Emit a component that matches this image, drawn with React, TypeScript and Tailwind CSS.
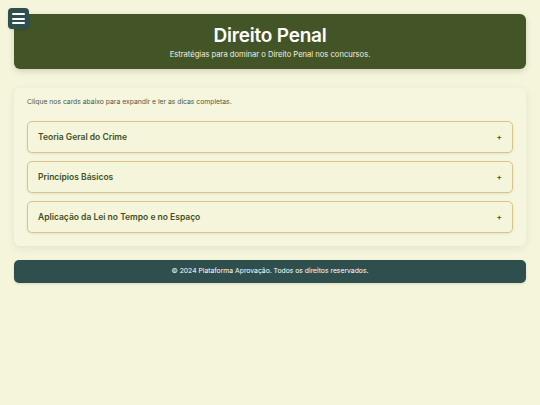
import React from "react";

const items = [
  "Teoria Geral do Crime",
  "Princípios Básicos",
  "Aplicação da Lei no Tempo e no Espaço",
];

export default function App() {
  return (
    <div
      className="min-h-[405px] bg-[#f5f5dc] px-[14px] pt-[14px] pb-4 relative"
      style={{ fontFamily: "Inter, 'Noto Sans', sans-serif" }}
    >
      <button className="absolute left-[8px] top-[8px] w-[21px] h-[21px] rounded-[4px] bg-[#2f4f4f] flex flex-col items-center justify-center gap-[2.5px] shadow z-10">
        <span className="block w-[13px] h-[2px] bg-white rounded" />
        <span className="block w-[13px] h-[2px] bg-white rounded" />
        <span className="block w-[13px] h-[2px] bg-white rounded" />
      </button>

      <header className="h-[55px] rounded-[6px] bg-[#435527] flex flex-col items-center justify-center text-white shadow-[0_2px_6px_rgba(0,0,0,0.15)]">
        <h1 className="text-[19px] leading-[22px] font-semibold tracking-[-0.2px] mt-[1px]">Direito Penal</h1>
        <p className="text-[7.6px] leading-[10px] mt-[3px] text-[#f0f0e0]">
          Estratégias para dominar o Direito Penal nos concursos.
        </p>
      </header>

      <main className="mt-[19px] rounded-[6px] bg-[#f6f5dd] shadow-[0_2px_8px_rgba(0,0,0,0.08)] px-[13px] pt-[9px] pb-[13px]">
        <p className="text-[6.8px] leading-[10px] text-[#4b5a4a]">
          Clique nos cards abaixo para expandir e ler as dicas completas.
        </p>
        <div className="mt-[14px] flex flex-col gap-[8px]">
          {items.map((t) => (
            <div
              key={t}
              className="h-[32px] rounded-[5px] border border-[#d9c48a] bg-[#f5f5dc] shadow-[0_1px_3px_rgba(0,0,0,0.08)] flex items-center justify-between pl-[10px] pr-[10px]"
            >
              <span className="text-[8.5px] leading-none font-semibold text-[#3f5124]">{t}</span>
              <span className="text-[8px] leading-none font-semibold text-[#3f5124]">+</span>
            </div>
          ))}
        </div>
      </main>

      <footer className="mt-[14px] h-[23px] rounded-[5px] bg-[#2f4f4f] flex items-center justify-center shadow">
        <span className="text-[6.8px] text-white">© 2024 Plataforma Aprovação. Todos os direitos reservados.</span>
      </footer>
    </div>
  );
}
